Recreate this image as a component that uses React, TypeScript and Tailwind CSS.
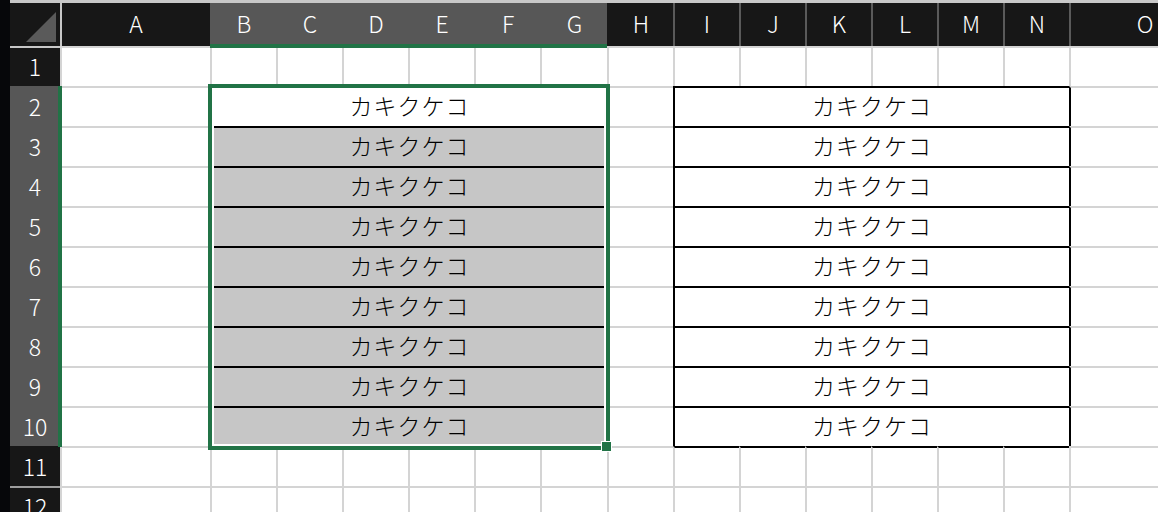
import React from 'react';

interface Col {
  label: string;
  width: string;
  headBg: string;
  headLine: string;
}

// column header setup, B..G are the highlighted (selected) columns
const columns: Col[] = [
  { label: 'A', width: 'w-[150px]', headBg: 'bg-[#171717]', headLine: 'border-l-[#c8c8c8]' },
  { label: 'B', width: 'w-[66px]', headBg: 'bg-[#575757]', headLine: 'border-l-[#575757]' },
  { label: 'C', width: 'w-[66px]', headBg: 'bg-[#575757]', headLine: 'border-l-[#575757]' },
  { label: 'D', width: 'w-[66px]', headBg: 'bg-[#575757]', headLine: 'border-l-[#575757]' },
  { label: 'E', width: 'w-[66px]', headBg: 'bg-[#575757]', headLine: 'border-l-[#575757]' },
  { label: 'F', width: 'w-[66px]', headBg: 'bg-[#575757]', headLine: 'border-l-[#575757]' },
  { label: 'G', width: 'w-[67px]', headBg: 'bg-[#575757]', headLine: 'border-l-[#575757]' },
  { label: 'H', width: 'w-[66px]', headBg: 'bg-[#171717]', headLine: 'border-l-[#171717]' },
  { label: 'I', width: 'w-[66px]', headBg: 'bg-[#171717]', headLine: 'border-l-[#5a5a5a]' },
  { label: 'J', width: 'w-[66px]', headBg: 'bg-[#171717]', headLine: 'border-l-[#5a5a5a]' },
  { label: 'K', width: 'w-[66px]', headBg: 'bg-[#171717]', headLine: 'border-l-[#5a5a5a]' },
  { label: 'L', width: 'w-[66px]', headBg: 'bg-[#171717]', headLine: 'border-l-[#5a5a5a]' },
  { label: 'M', width: 'w-[66px]', headBg: 'bg-[#171717]', headLine: 'border-l-[#5a5a5a]' },
  { label: 'N', width: 'w-[66px]', headBg: 'bg-[#171717]', headLine: 'border-l-[#5a5a5a]' },
  { label: 'O', width: 'w-[150px]', headBg: 'bg-[#171717]', headLine: 'border-l-[#5a5a5a]' },
];

const TEXT = 'カキクケコ';
const cell = 'shrink-0 h-full border-t-2 border-l-2';
const jpText = 'flex items-center justify-center pb-[4px] text-black text-[23px] font-light tracking-[1px]';

const RowHeader: React.FC<{ n: number }> = ({ n }) => {
  const selected = n >= 2 && n <= 10;
  const line =
    n === 1 ? 'border-t-[#c8c8c8]' :
    selected ? 'border-t-[#575757]' :
    n === 11 ? 'border-t-[#171717]' : 'border-t-[#9e9e9e]';
  return (
    <div
      className={`shrink-0 w-[50px] h-full border-t-2 ${line} ${selected ? 'bg-[#575757]' : 'bg-[#171717]'} flex items-center justify-center pb-[2px] text-white text-[23px] font-light`}
    >
      {n}
    </div>
  );
};

const PlainRow: React.FC<{ n: number }> = ({ n }) => (
  <div className="flex shrink-0 h-[40px]">
    <RowHeader n={n} />
    {columns.map((c) => {
      // bottom edge of both tables sits on the top line of row 11
      const black = n === 11 && c.label !== 'A' && c.label !== 'H' && c.label !== 'O';
      return (
        <div
          key={c.label}
          className={`${cell} ${c.width} bg-white border-l-[#d4d4d4] ${black ? 'border-t-black' : 'border-t-[#d4d4d4]'}`}
        />
      );
    })}
  </div>
);

const TableRow: React.FC<{ n: number }> = ({ n }) => (
  <div className="flex shrink-0 h-[40px]">
    <RowHeader n={n} />
    <div className={`${cell} w-[150px] bg-white border-t-[#d4d4d4] border-l-[#d4d4d4]`} />
    <div className={`${cell} w-[397px] border-t-black border-l-black ${n === 2 ? 'bg-white' : 'bg-[#c6c6c6]'} ${jpText}`}>
      {TEXT}
    </div>
    <div className={`${cell} w-[66px] bg-white border-t-[#d4d4d4] border-l-black`} />
    <div className={`${cell} w-[396px] bg-white border-t-black border-l-black ${jpText}`}>
      {TEXT}
    </div>
    <div className={`${cell} w-[150px] bg-white border-t-[#d4d4d4] border-l-black`} />
  </div>
);

const App: React.FC = () => {
  const rows = Array.from({ length: 12 }, (_, i) => i + 1);

  return (
    <div className="flex w-[1158px] h-[512px] overflow-hidden bg-white font-['Noto_Sans_CJK_JP','Noto_Sans',sans-serif]">
      {/* window edge */}
      <div className="shrink-0 w-[10px] h-full bg-[#06070a]" />

      <div className="relative flex flex-col shrink-0">
        <div className="shrink-0 h-[3px] bg-[#c8c8c8]" />

        {/* Column headers */}
        <div className="flex shrink-0 h-[43px] bg-[#171717]">
          <div className="shrink-0 w-[50px] h-full">
            <svg width="50" height="43" viewBox="0 0 50 43">
              <polygon points="16,39 46,39 46,9" fill="#5a5a5a" />
            </svg>
          </div>
          {columns.map((c) => (
            <div
              key={c.label}
              className={`shrink-0 h-full border-l-2 ${c.width} ${c.headBg} ${c.headLine} flex items-center justify-center pb-[2px] text-white text-[23px] font-light`}
            >
              {c.label}
            </div>
          ))}
        </div>

        {/* Grid */}
        {rows.map((n) =>
          n >= 2 && n <= 10 ? <TableRow key={n} n={n} /> : <PlainRow key={n} n={n} />
        )}

        {/* selection markers */}
        <div className="absolute left-[200px] top-[44px] w-[397px] h-[4px] bg-[#217346]" />
        <div className="absolute left-[48px] top-[86px] w-[4px] h-[361px] bg-[#217346]" />
        <div className="absolute left-[198px] top-[84px] w-[402px] h-[366px] border-4 border-[#217346] shadow-[inset_0_0_0_2px_#ffffff]" />
        <div className="absolute left-[591px] top-[441px] w-[11px] h-[11px] bg-[#217346] border border-white" />
      </div>
    </div>
  );
};

export default App;
